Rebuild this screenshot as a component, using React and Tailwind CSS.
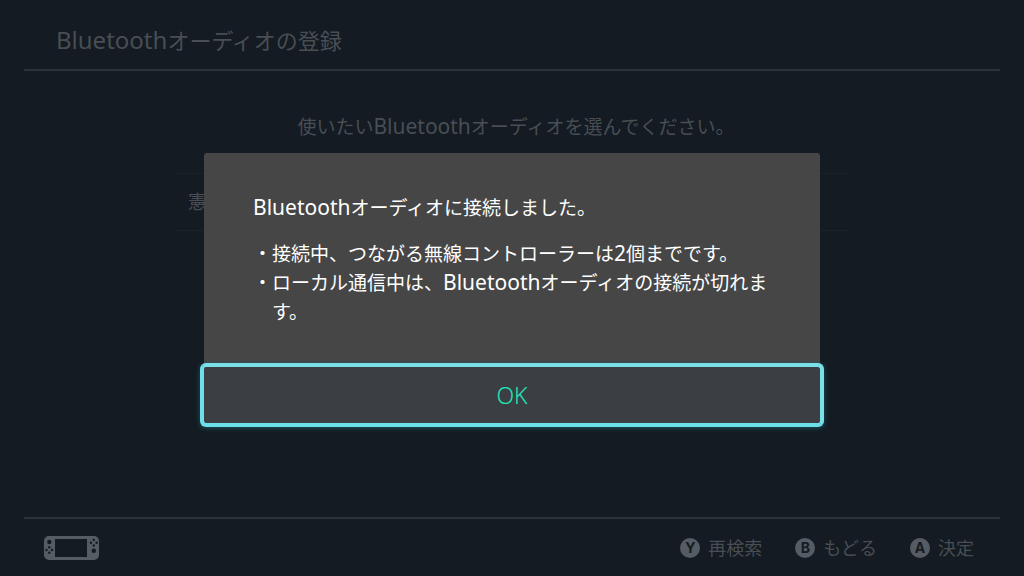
import React, { useState } from 'react';

const Latin = ({ children }) => (
  <span className="text-[21px] leading-none">{children}</span>
);

const ConsoleIcon = () => (
  <svg width="55" height="24" viewBox="0 0 55 24" aria-hidden="true">
    <path
      fill="#565c63"
      fillRule="evenodd"
      d="M5 0h45a5 5 0 0 1 5 5v14a5 5 0 0 1-5 5H5a5 5 0 0 1-5-5V5a5 5 0 0 1 5-5ZM11 3v18h32V3Z"
    />
    <g fill="#141b22">
      <circle cx="5.3" cy="6" r="2.2" />
      <circle cx="5.3" cy="11.2" r="1.2" />
      <circle cx="5.3" cy="16.8" r="1.2" />
      <circle cx="2.5" cy="14" r="1.2" />
      <circle cx="8.1" cy="14" r="1.2" />
      <circle cx="49.8" cy="14.8" r="2.2" />
      <circle cx="49.8" cy="3.9" r="1.2" />
      <circle cx="49.8" cy="9.5" r="1.2" />
      <circle cx="47" cy="6.7" r="1.2" />
      <circle cx="52.6" cy="6.7" r="1.2" />
    </g>
  </svg>
);

const actions = [
  { key: 'Y', label: '再検索' },
  { key: 'B', label: 'もどる' },
  { key: 'A', label: '決定' },
];

const notes = [
  <>接続中、つながる無線コントローラーは<Latin>2</Latin>個までです。</>,
  <>ローカル通信中は、<Latin>Bluetooth</Latin>オーディオの接続が切れます。</>,
];

const Dialog = ({ onClose }) => (
  <div className="absolute inset-0 flex items-center justify-center px-6">
    <div
      role="dialog"
      aria-modal="true"
      aria-labelledby="dialog-title"
      className="flex w-full max-w-[616px] flex-col rounded-[3px] bg-[#464646] text-[19px] leading-[29px] text-white"
    >
      <div className="px-[49px] pt-[41px] pb-10">
        <h2 id="dialog-title">
          <Latin>Bluetooth</Latin>オーディオに接続しました。
        </h2>
        <ul className="mt-[17px]">
          {notes.map((note, i) => (
            <li key={i} className="flex">
              <span>・</span>
              <p>{note}</p>
            </li>
          ))}
        </ul>
      </div>
      <button
        onClick={onClose}
        className="-m-1 h-16 rounded-md border-4 border-[#79e0ea] border-b-[#6cdfe9] border-l-[#6cdfe9] bg-[#3b3e42] text-[23px] font-light text-[#1fe6b5] shadow-[0_1px_5px_#1d5660] outline-none"
      >
        OK
      </button>
    </div>
  </div>
);

const App = () => {
  const [open, setOpen] = useState(true);

  return (
    <div className="relative flex min-h-screen flex-col bg-[#141b22] px-6 font-['Noto_Sans','Noto_Sans_CJK_JP',sans-serif] font-normal text-[#484e54]">
      <header className="flex h-[71px] items-center border-b-2 border-[#2b3239] px-8 pt-3">
        <h1 className="text-[22px]">
          <span className="text-2xl">Bluetooth</span>オーディオの登録
        </h1>
      </header>

      <main className="flex flex-1 flex-col items-center pt-[42px] text-[19px] leading-7">
        <p className="pl-2">
          使いたい<Latin>Bluetooth</Latin>オーディオを選んでください。
        </p>
        <ul className="mt-8 w-full max-w-[672px]">
          <li>
            <button className="flex h-[58px] w-full items-center border-y border-[#1b2229] px-3">憲</button>
          </li>
        </ul>
      </main>

      <footer className="flex h-[59px] items-center justify-between border-t-2 border-[#2b3239] px-5">
        <ConsoleIcon />
        <div className="flex gap-[33px] pr-1.5">
          {actions.map((action) => (
            <button key={action.key} className="flex items-center gap-2 text-lg" onClick={() => setOpen(true)}>
              <span className="flex h-5 w-5 items-center justify-center rounded-full bg-[#565c63] font-['Inter',sans-serif] text-sm font-bold text-[#141b22]">
                {action.key}
              </span>
              {action.label}
            </button>
          ))}
        </div>
      </footer>

      {open && <Dialog onClose={() => setOpen(false)} />}
    </div>
  );
};

export default App;
